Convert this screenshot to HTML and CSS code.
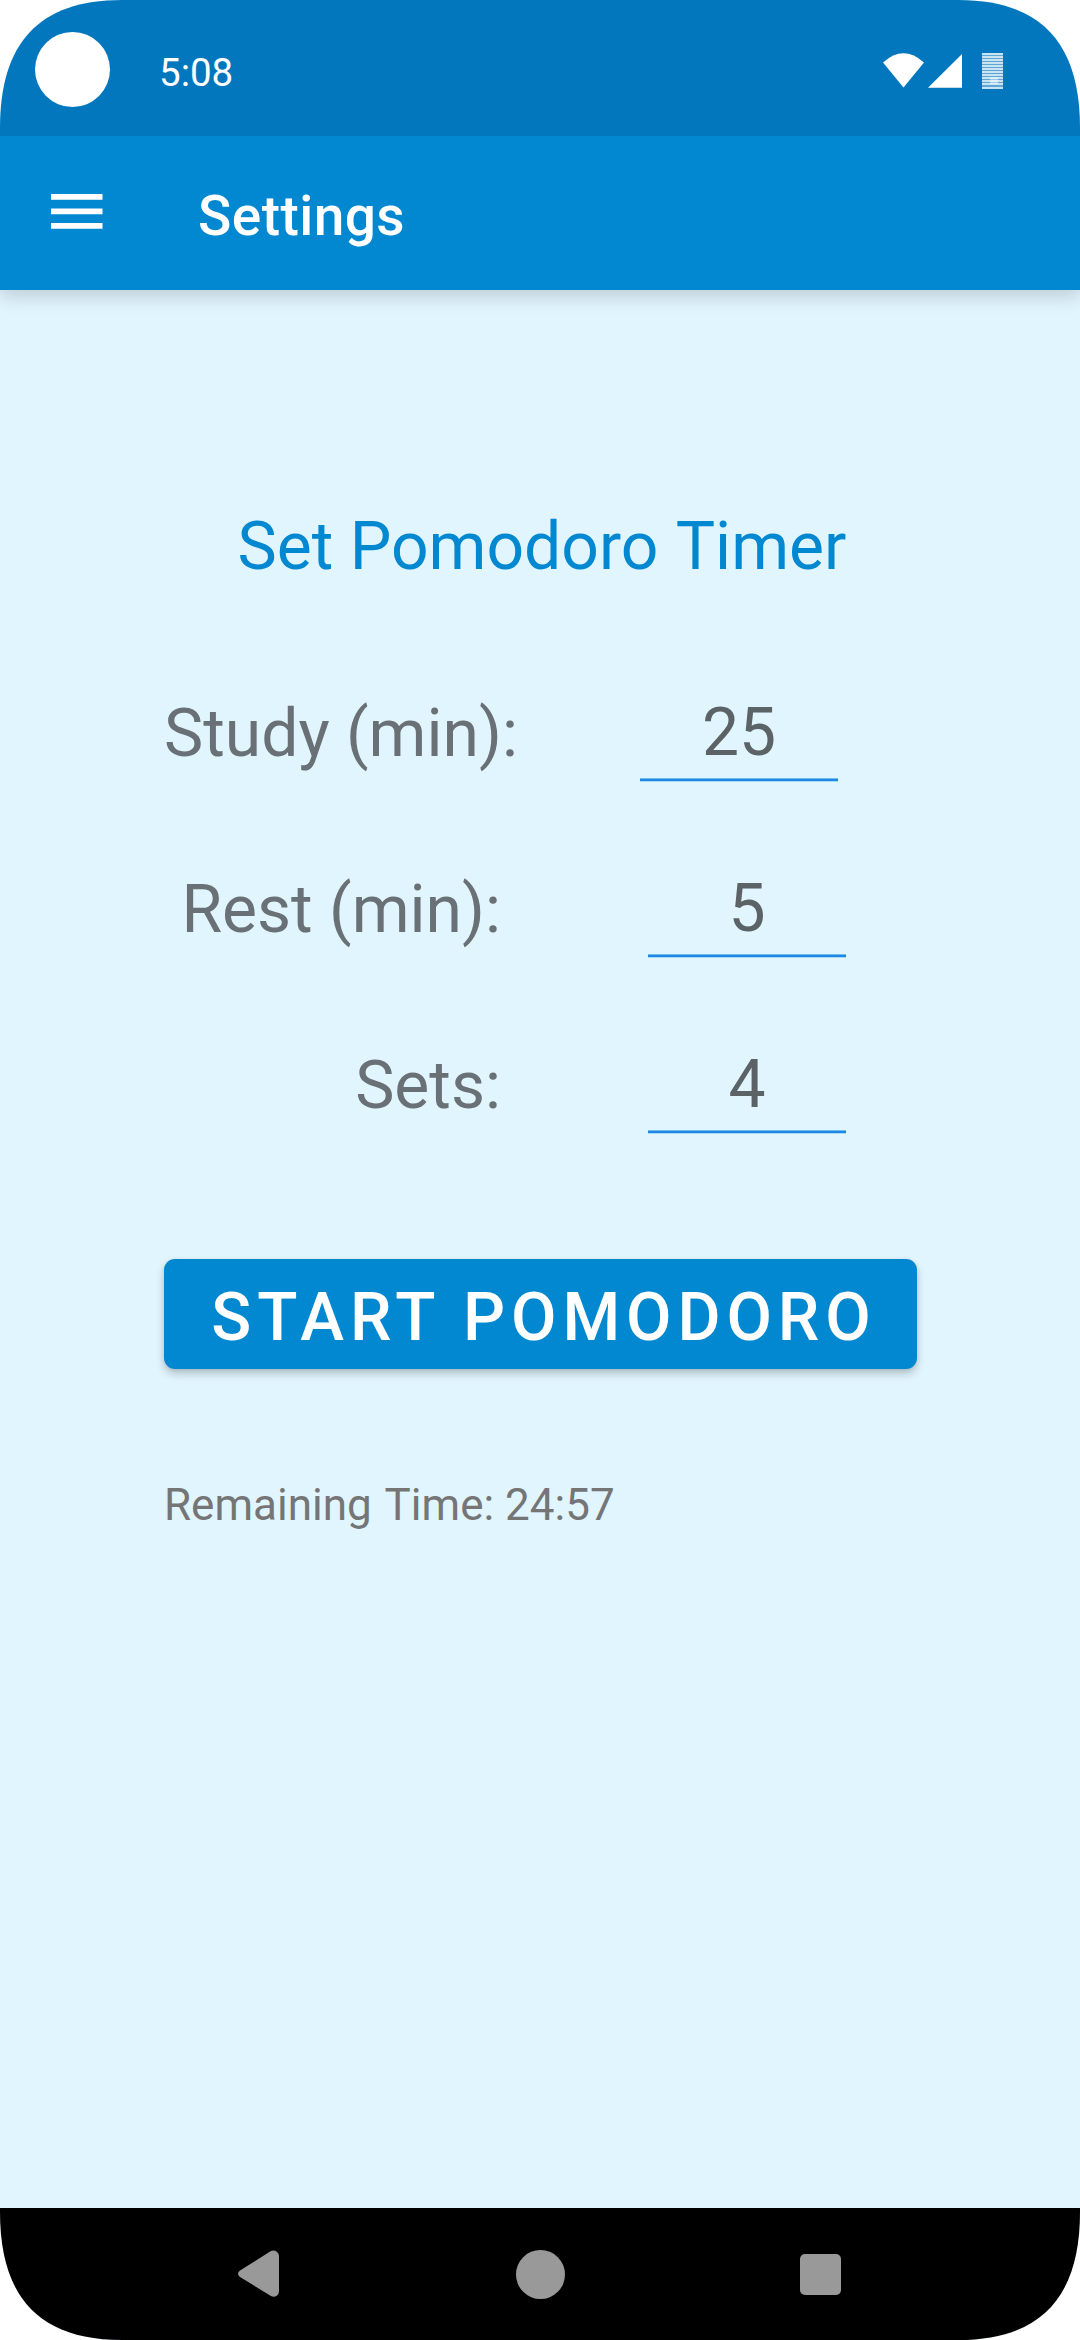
FILE: index.html
```html
<!DOCTYPE html>
<html lang="en">
<head>
<meta charset="utf-8">
<title>Settings</title>
<link rel="stylesheet" href="styles.css">
</head>
<body>
<div class="screen">
  <header class="status-bar">
    <span class="camera"></span>
    <span class="clock">5:08</span>
    <svg class="status-icons" width="122" height="38" viewBox="0 0 122 38">
      <path fill="#fff" d="M0 9.500Q20.500 -9 41 9.500L20.500 34.500Z"/>
      <path fill="#fff" d="M45 34.700H79V1Z"/>
      <rect x="99" y="0" width="21" height="36" fill="#5ba7d5"/>
      <path stroke="#fff" stroke-width="1.700" stroke-opacity=".9" d="M99 1h21M99 4h21M99 7h21M99 10h21M99 13h21M99 16h21M99 19h21M99 22h21M99 25h21M99 28h21M99 31h21M99 35h21"/>
      <rect x="107" y="24" width="8" height="7" fill="#fff" fill-opacity=".4"/>
    </svg>
  </header>
  <div class="app-bar">
    <svg class="menu-icon" width="52" height="36" viewBox="0 0 52 36"><path fill="#fff" d="M0 0h51.500v5.700H0zM0 14.500h51.500v5.700H0zM0 29h51.500v5.700H0z"/></svg>
    <h1 class="title">Settings</h1>
  </div>
  <main class="content">
    <h2 class="heading">Set Pomodoro <span class="spaced">Timer</span></h2>
    <div class="row row-first"><label class="label">Study (min):</label><span class="field">25</span></div>
    <div class="row"><label class="label">Rest (min):</label><span class="field">5</span></div>
    <div class="row"><label class="label">Sets:</label><span class="field">4</span></div>
    <button class="start">START POMODORO</button>
    <p class="remaining">Remaining <span class="spaced">Time: 24:57</span></p>
  </main>
  <nav class="nav-bar">
    <svg class="nav-back" width="42" height="48" viewBox="0 0 42 48"><path fill="#999" d="M2 20.500L32.500 1.200Q36 -.5 39 2Q41 3.500 41 6V41Q41 44 39 45.500Q36 48 32.500 45.800L2 27Q-2 23.700 2 20.500Z"/></svg>
    <span class="nav-home"></span>
    <span class="nav-recent"></span>
  </nav>
</div>
</body>
</html>
```
FILE: styles.css
```css
* { box-sizing: border-box; }
body { margin: 0; background: #fff; font-family: Roboto, sans-serif; }
h1, h2, p { margin: 0; font-weight: 400; }
.screen {
  width: 1080px; height: 2340px; overflow: hidden;
  display: flex; flex-direction: column; background: #e1f5fe;
  clip-path: path("M0 128C0 44 38 0 122 0H958C1042 0 1080 44 1080 128V2212C1080 2296 1042 2340 958 2340H122C38 2340 0 2296 0 2212Z");
}
.status-bar {
  flex: none; height: 136px; display: flex; align-items: flex-start; position: relative; z-index: 1;
  padding: 32px 75px 0 35px; background: #0277bd; color: #fff;
}
.camera { width: 75px; height: 75px; border-radius: 50%; background: #fff; }
.clock { margin: 18px 0 0 49px; font-size: 38.5px; line-height: 46px; }
.status-icons { margin: 21px 0 0 auto; }
.app-bar {
  flex: none; height: 154px; display: flex; align-items: flex-start; position: relative;
  padding: 58px 51px 0; background: #0288d1; color: #fff;
  box-shadow: 0 6px 18px rgba(0,0,0,.17);
}
.title { margin: -10px 0 0 95px; font-size: 55px; line-height: 64px; font-weight: 500; letter-spacing: .45px; }
.content { flex: 1; display: flex; flex-direction: column; align-items: flex-start; padding: 213px 163px 0 164px; }
.heading { align-self: center; padding-left: 3px; color: #0288d1; font-size: 66px; line-height: 88px; }
.spaced { margin-left: 2px; }
.heading .spaced { margin-left: 1px; }
.row { width: 100%; display: flex; justify-content: space-between; padding: 0 71px 0 0; margin-top: 78px; }
.row-first { margin-top: 92px; padding-right: 79px; }
.label { width: 337px; text-align: right; color: #697176; font-size: 66px; line-height: 101px; height: 98px; white-space: nowrap; }
.row-first .label { width: 353px; }
.field {
  width: 198px; height: 99px; margin-bottom: -1px; text-align: center; color: #5b6367; font-size: 66px; line-height: 99px;
  background: linear-gradient(#73b9f1 0 1px, #1e88e5 1px 3px, #a9d7f7 3px) bottom / 100% 4px no-repeat;
}
.start {
  width: 753px; height: 110px; margin-top: 126px; padding: 7px 0 0 7px; border: 0; border-radius: 11px;
  background: #0288d1; color: #fff; font: 500 66px/88px Roboto, sans-serif; letter-spacing: 5.9px; word-spacing: 1px;
  box-shadow: 0 5px 9px rgba(0,0,0,.2), 0 1px 4px rgba(0,0,0,.08);
}
.remaining { margin-top: 110px; color: #757575; font-size: 44px; line-height: 52px; }
.nav-bar { flex: none; height: 132px; display: flex; align-items: center; padding: 0 238px; background: #000; }
.nav-home { width: 49px; height: 49px; margin-left: 236px; border-radius: 50%; background: #999; }
.nav-recent { width: 41px; height: 41px; margin-left: 235px; border-radius: 5px; background: #999; }
```
